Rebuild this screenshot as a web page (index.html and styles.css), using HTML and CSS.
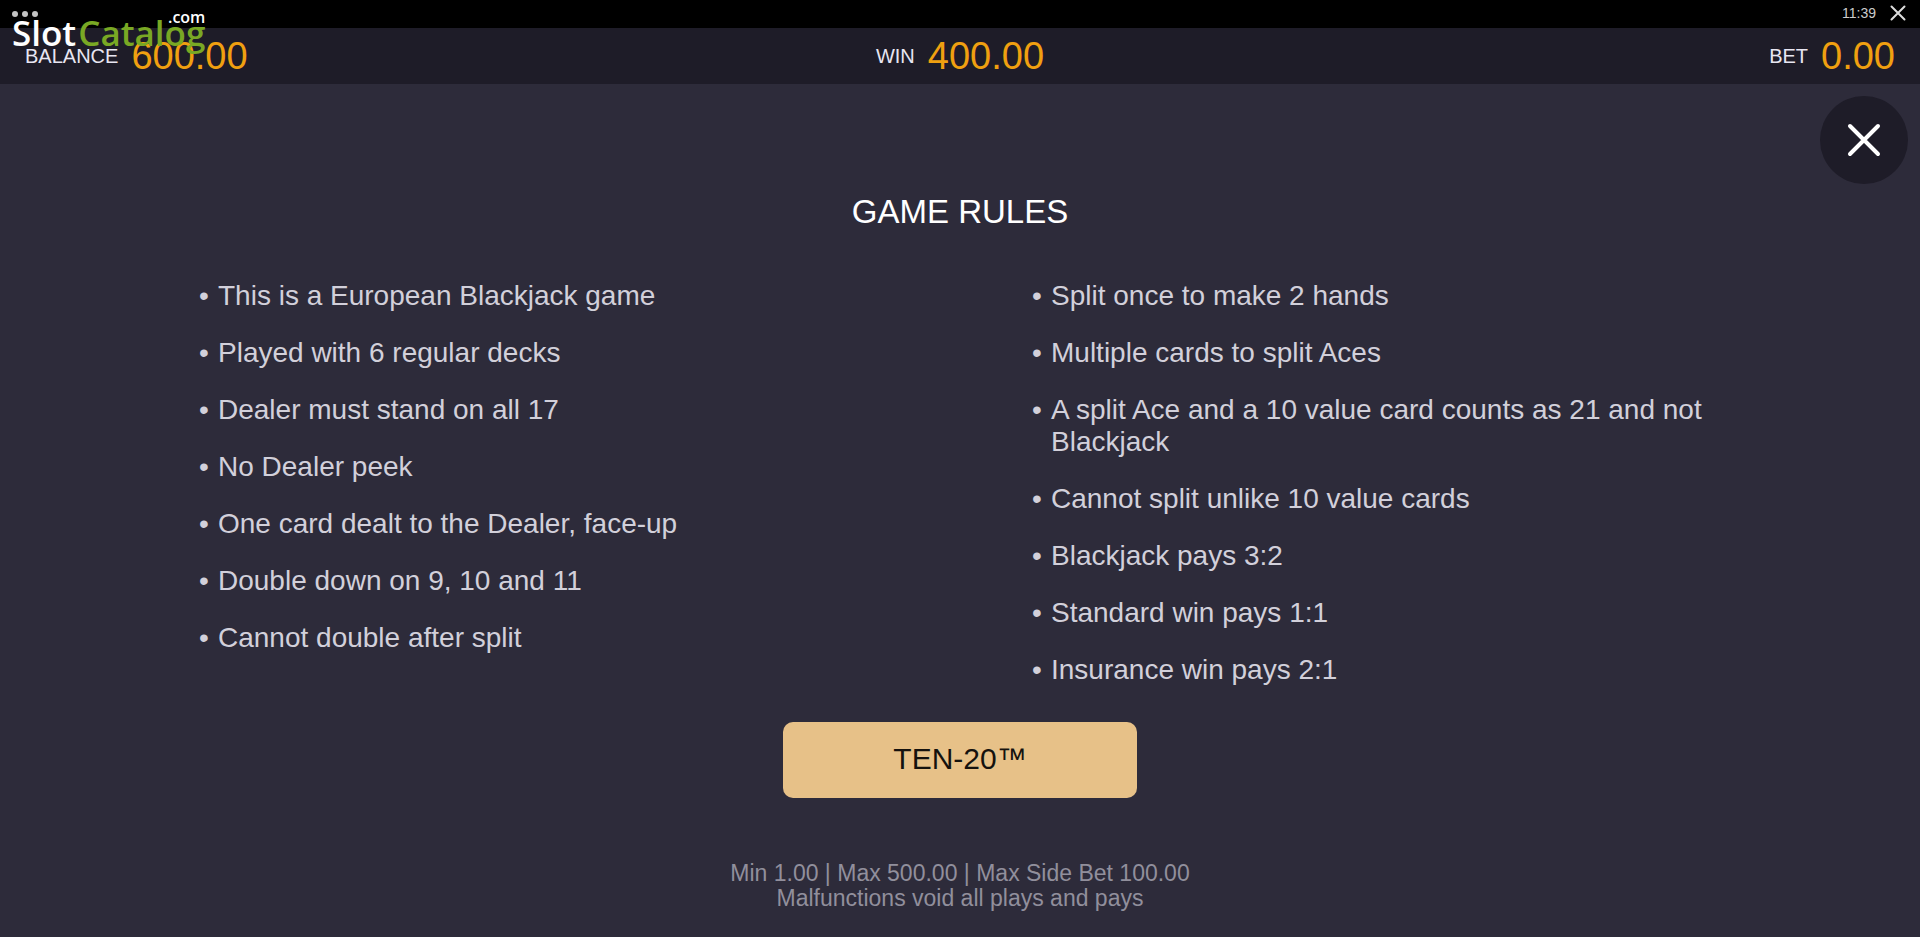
FILE: index.html
```
<!DOCTYPE html>
<html lang="en">
<head>
    <meta charset="UTF-8">
    <meta name="viewport" content="width=device-width, initial-scale=1.0">
    <title>Game Rules</title>
    <link rel="stylesheet" href="styles.css">
</head>
<body>
    <div class="logo">
        <svg class="logo-dots" width="26" height="8" viewBox="0 0 26 8" aria-hidden="true">
            <circle cx="3" cy="4" r="3"/>
            <circle cx="13" cy="4" r="3"/>
            <circle cx="23" cy="4" r="3"/>
        </svg>
        <span class="logo-slot">Slot</span>
        <span class="logo-catalog">Catalog</span>
        <span class="logo-com">.com</span>
    </div>

    <header class="top-bar">
        <span class="clock">11:39</span>
        <button type="button" class="exit" aria-label="Exit game">
            <svg width="16" height="16" viewBox="0 0 16 16">
                <path d="M1.5 1.5l13 13M14.5 1.5l-13 13"/>
            </svg>
        </button>
    </header>

    <div class="status-bar">
        <div class="status balance">
            <span class="label">BALANCE</span>
            <span class="value">600.00</span>
        </div>
        <div class="status win">
            <span class="label">WIN</span>
            <span class="value">400.00</span>
        </div>
        <div class="status bet">
            <span class="label">BET</span>
            <span class="value">0.00</span>
        </div>
    </div>

    <main class="rules">
        <button type="button" class="close" aria-label="Close rules">
            <svg width="34" height="34" viewBox="0 0 34 34">
                <path d="M3 3l28 28M31 3L3 31"/>
            </svg>
        </button>

        <h1>GAME RULES</h1>

        <div class="columns">
            <ul>
                <li>This is a European Blackjack game</li>
                <li>Played with 6 regular decks</li>
                <li>Dealer must stand on all 17</li>
                <li>No Dealer peek</li>
                <li>One card dealt to the Dealer, face-up</li>
                <li>Double down on 9, 10 and 11</li>
                <li>Cannot double after split</li>
            </ul>
            <ul>
                <li>Split once to make 2 hands</li>
                <li>Multiple cards to split Aces</li>
                <li>A split Ace and a 10 value card counts as 21 and not Blackjack</li>
                <li>Cannot split unlike 10 value cards</li>
                <li>Blackjack pays 3:2</li>
                <li>Standard win pays 1:1</li>
                <li>Insurance win pays 2:1</li>
            </ul>
        </div>

        <button type="button" class="side-bet">TEN-20™</button>

        <footer class="limits">
            <p>Min 1.00 | Max 500.00 | Max Side Bet 100.00</p>
            <p>Malfunctions void all plays and pays</p>
        </footer>
    </main>
</body>
</html>
```
FILE: styles.css
```
* {
    box-sizing: border-box;
}

body {
    margin: 0;
    min-height: 100vh;
    display: flex;
    flex-direction: column;
    font-family: "Liberation Sans", Arial, sans-serif;
    background-color: #2d2b3a;
    color: #fff;
}

button {
    font-family: inherit;
    border: none;
    padding: 0;
    cursor: pointer;
}

svg {
    display: block;
}

path {
    fill: none;
    stroke: currentColor;
    stroke-linecap: round;
}

/* watermark over the bars */
.logo {
    position: absolute;
    top: 10px;
    left: 12px;
    display: flex;
    font-family: "Open Sans", "Noto Sans", sans-serif;
    font-size: 35px;
    font-weight: 600;
    line-height: 46px;
    pointer-events: none;
}

.logo-dots {
    position: absolute;
    top: 0;
    left: 0;
    fill: #c4c4c4;
}

.logo-slot {
    color: #fff;
    margin-right: 2px;
}

.logo-catalog {
    color: #79a824;
}

.logo-com {
    position: absolute;
    top: -4px;
    right: 0;
    font-size: 16px;
    line-height: 22px;
}

.top-bar {
    display: flex;
    justify-content: flex-end;
    align-items: center;
    gap: 14px;
    height: 28px;
    padding: 0 14px 2px;
    background-color: #000;
}

.clock {
    font-size: 14px;
    line-height: 16px;
    color: #ccc;
}

.exit {
    background: none;
    color: #ddd;
}

.exit path {
    stroke-width: 2;
}

.status-bar {
    display: grid;
    grid-template-columns: 1fr auto 1fr;
    align-items: center;
    height: 56px;
    padding: 0 25px;
    background-color: #1e1c28;
}

.status {
    display: flex;
    align-items: center;
    gap: 13px;
}

.bet {
    justify-content: flex-end;
}

.label {
    font-size: 20px;
    color: #e8e6f2;
}

.value {
    font-size: 38px;
    line-height: 44px;
    color: #f0a010;
}

.rules {
    flex: 1;
    position: relative;
    display: flex;
    flex-direction: column;
    align-items: center;
    padding: 108px 10% 26px;
}

.close {
    position: absolute;
    top: 12px;
    right: 12px;
    width: 88px;
    height: 88px;
    border-radius: 50%;
    display: flex;
    justify-content: center;
    align-items: center;
    background-color: #1e1c28;
    color: #fff;
}

.close path {
    stroke-width: 4;
}

h1 {
    margin: 0 0 48px;
    font-size: 33px;
    font-weight: 400;
    line-height: 40px;
}

.columns {
    width: 100%;
    display: grid;
    grid-template-columns: 1fr 1fr;
    gap: 130px;
}

ul {
    margin: 0;
    padding: 0 0 0 7px;
    list-style: none;
    display: flex;
    flex-direction: column;
    gap: 25px;
}

li {
    display: flex;
    font-size: 28px;
    line-height: 32px;
    color: #d2d0da;
}

li::before {
    content: "•";
    flex: 0 0 19px;
}

.side-bet {
    width: 354px;
    height: 76px;
    margin-top: 36px;
    padding-bottom: 2px;
    border-radius: 10px;
    font-size: 30px;
    background-color: #e7c188;
    color: #15120e;
}

.limits {
    margin-top: auto;
    text-align: center;
    font-size: 23px;
    line-height: 25px;
    color: #918f9c;
}

.limits p {
    margin: 0;
}
```
